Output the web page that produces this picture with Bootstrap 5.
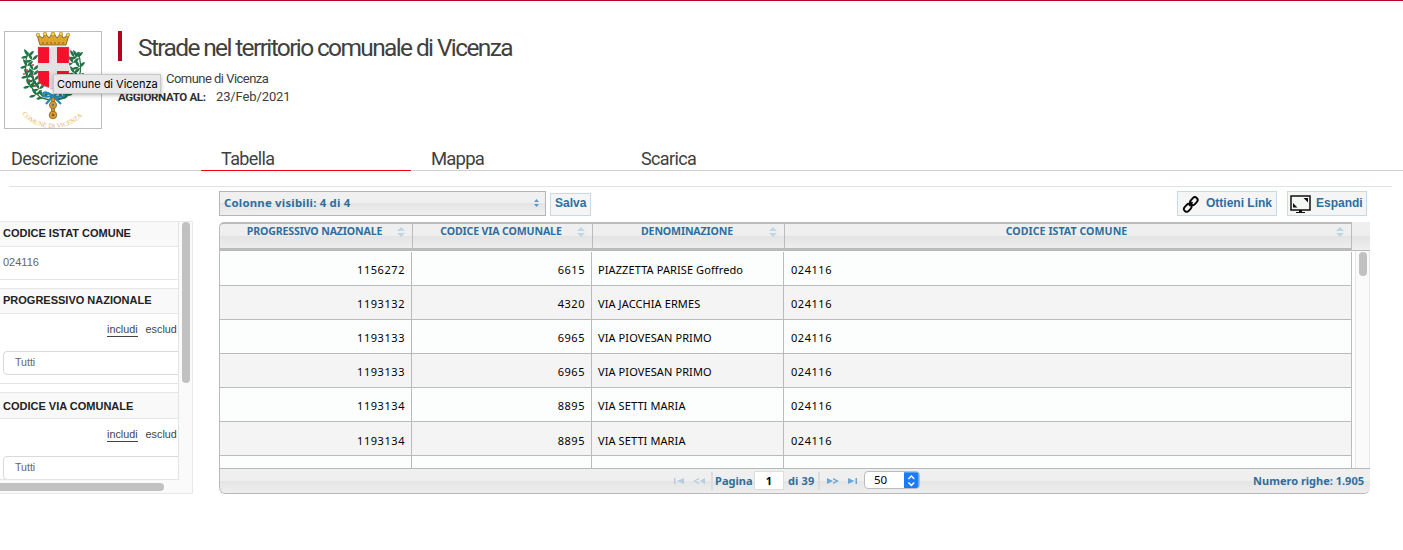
<!DOCTYPE html>
<html lang="it">
<head>
<meta charset="utf-8">
<title>Strade nel territorio comunale di Vicenza</title>
<link href="https://cdn.jsdelivr.net/npm/bootstrap@5.3.0/dist/css/bootstrap.min.css" rel="stylesheet">
<style>
body{font-family:"Noto Sans",sans-serif;color:#404040;height:550px;overflow:hidden;border-top:1px solid #b1071e;background:#fff;line-height:1.2}
.head-area{height:140px;padding:30px 0 0 4px}
.crest{width:98px;height:98px;border:1px solid #bdbdbd;flex:none}
.crest svg{display:block}
.meta{margin-left:16px;font-family:Roboto,sans-serif}
.title-line{border-left:4px solid #b1071e;height:30px;padding-left:16px;font:400 24.5px/33px Roboto,sans-serif;letter-spacing:-1.63px;white-space:nowrap;color:#404040;margin:0}
.owner{padding-left:48px;margin-top:10px;height:16px;font-size:13px;line-height:16px;letter-spacing:-.53px}
.upd{height:18px;line-height:18px;margin-top:1px;font-size:13px;letter-spacing:-.12px}
.upd b{font-size:11.5px;letter-spacing:-.32px;color:#303030;width:98px;white-space:nowrap}
.tip{position:absolute;left:53px;top:74px;width:108px;height:20px;background:#e9e8e8;border:1px solid #c8c8c8;box-shadow:0 1px 4px rgba(0,0,0,.3);font:11px/18px Inter,sans-serif;color:#000;padding-left:3px;white-space:nowrap;letter-spacing:-.02px}
.page-tabs{height:30px;border-bottom:1px solid #d0d0d0}
.page-tabs a{width:210px;padding:6px 0 0 20px;height:30px;font-family:Roboto,sans-serif;font-size:18px;line-height:24px;color:#404040;text-decoration:none;letter-spacing:-.62px}
.page-tabs a.on{border-bottom:1px solid #f00011}
.page-tabs a:first-child{width:201px;padding-left:11px}
.page-tabs a:nth-child(3){letter-spacing:-.75px;letter-spacing:-.8px;word-spacing:0;font-size:18.500px}
.rule{margin:15px 11px 0 9px;border-top:1px solid #e2e2e2}
.side{width:193px;height:273px;margin-top:34px;flex:none;background:#fafafa;border:1px solid #e9e9e9;border-left:0;font-family:"Liberation Sans",sans-serif}
.side-view{width:179px;height:258px;overflow:hidden;background:#fff;border-right:1px solid #e4e4e4;border-bottom:1px solid #e4e4e4}
.facet-h{height:25px;background:#f9f9f9;border-bottom:1px solid #e7e7e7;font-weight:700;font-size:11px;line-height:23px;padding-left:3px;color:#222;white-space:nowrap}
.facet-b{border-bottom:1px solid #e4e4e4;margin-bottom:8px;font-size:11px;color:#666}
.facet+.facet{border-top:1px solid #e7e7e7}
.modes{padding:8px 0 0 107px;height:37px;gap:8px;font-size:10.8px;color:#444;white-space:nowrap}
.modes span{height:15px;line-height:15px}
.modes span:first-child{border-bottom:1px solid #444}
.inp{margin-left:3px;width:200px;height:24px;border:1px solid #d9d9d9;border-radius:4px;padding-left:11px;line-height:21px;font-size:10.6px}
.thumb{background:#c1c1c1;border-radius:4px}
.v1{width:8px;height:161px;margin:0 2px 0 3px}
.h1b{width:164px;height:8px;margin-top:3px;border-radius:0 4px 4px 0}
.main-col{width:1151px;margin-left:26px;margin-top:4px;font-family:"Noto Sans",sans-serif;font-weight:700;font-size:11px;color:#2e6e9e}
.tools{height:31px}
.cols-sel{width:327px;height:25px;border:1px solid #b5b5b5;background:linear-gradient(#f0f0f0 48%,#e5e5e5 50%,#efefef);padding:0 5px 2px 4px;font-size:11.4px;letter-spacing:.2px}
.ab{background:#f5f5f5;border:1px solid #c5dbec;height:24px;font:700 12px/18px "Liberation Sans",sans-serif;color:#2e6e9e;white-space:nowrap}
.gridbox{height:272px;border-bottom:1px solid #b8b8b8;border-radius:5px 0 6px 6px;overflow:hidden}
.g-head{height:29px;background:#efefef linear-gradient(#efefef 46%,#e4e4e4 50%,#f0f0f0)}
.g-cols{width:1133px;border:solid #bbb;border-width:2px 1px 3px;border-radius:5px 0 0 0}
.g-cols>div{border-right:1px solid #bbb;line-height:15px;padding:0 5px 0 12px;font-size:10.6px;letter-spacing:-.15px}
.g-cols>.a{width:193px}
.g-cols>div:last-child{border:0;letter-spacing:.05px}
.g-head-r{border-bottom:1px solid #bbb;margin-top:1px}
.a{width:192px}.b{width:180px}.c{width:192px}.d{flex:1}
.sort{margin:3px 0 0 auto;flex:none}
.g-body{height:217px;overflow:hidden}
.g-rows{width:1133px;border-left:1px solid #bbb;padding-top:1px}
.g-row{height:34px;border-bottom:1px solid #bbb;background:#fcfdfd;font:11px/33px "Noto Sans",sans-serif;color:#000}
.g-row:nth-child(even){background:#f4f4f4}
.g-row div{border-right:1px solid #bbb;padding:1px 6px 0;overflow:hidden;white-space:nowrap;height:100%}
.g-row .c{letter-spacing:.1px}
.g-row .num{letter-spacing:.55px;padding-left:7px}
.g-row:nth-child(6) div{padding-top:2px}
.g-row .a,.g-row .b{text-align:right;letter-spacing:.55px}
.g-bar{width:15px;background:#fafafa;border:solid #e8e8e8;border-width:0 1px;margin-left:3px}
.g-bar .thumb{width:8px;height:24px;margin:1px 0 0 3px}
.g-foot{border:1px solid #b8b8b8;border-width:1px 0 0 1px;height:25px;background:linear-gradient(#efefef 48%,#e5e5e5 52%,#eee);font-size:11px;border-radius:0 0 0 6px}
.pg{background:#fff;border:1px solid #ddd;width:30px;height:19px;text-align:center;color:#000;line-height:17px;margin-top:-1px}
.sep{width:2px;height:18px;background:#ddd}
.ps{width:56px;height:18px;background:#fff;border:1px solid #bbb;border-radius:4px;overflow:hidden;color:#000;font-weight:400;font-size:11.5px;margin-top:-2px}
</style>
</head>
<body>
<svg width="0" height="0" class="position-absolute"><defs>
<g id="so" fill="#bfd6e6"><path d="M4 0 8 4H0zM4 10 0 6h8z"/></g>
<g id="lf"><path d="M0 0Q-4-2-4-7Q1-5 0 0Q2-5 6-5Q5 0 0 0Q-5-1-7 2Q-3 4 0 0"/></g>
</defs></svg>
<header class="head-area d-flex">
  <div class="crest"><svg width="96" height="96" viewBox="0 0 96 96">
    <g fill="none" stroke="#257447" stroke-width="1.3"><path d="M23 20Q14 47 36 66L45 68M73 20Q82 47 60 66L51 68"/></g>
    <g fill="#237547">
      <use href="#lf" x="23" y="24"/><use href="#lf" x="27" y="28"/><use href="#lf" x="22" y="34"/><use href="#lf" x="28" y="38"/><use href="#lf" x="23" y="44"/><use href="#lf" x="29" y="48"/><use href="#lf" x="25" y="54"/><use href="#lf" x="34" y="57"/><use href="#lf" x="31" y="63"/><use href="#lf" x="38" y="65"/><use href="#lf" x="28" y="43"/><use href="#lf" x="31" y="53"/>
      <use href="#lf" x="72" y="25"/><use href="#lf" x="68" y="31"/><use href="#lf" x="74" y="35"/><use href="#lf" x="69" y="25"/><use href="#lf" x="69" y="41"/><use href="#lf" x="73" y="46"/><use href="#lf" x="69" y="54"/><use href="#lf" x="63" y="64"/><use href="#lf" x="57" y="66"/>
    </g>
    <g fill="#d8354a"><circle cx="22" cy="38" r="1"/><circle cx="28" cy="33" r="1"/><circle cx="24" cy="48" r="1"/><circle cx="30" cy="54" r="1"/><circle cx="27" cy="43" r="1"/><circle cx="19" cy="42" r="1"/></g>
    <path d="M35 13 32 3l6 3 2-5 4 5 4-6 4 6 4-5 2 5 6-3-3 10z" fill="#dba62b" stroke="#75551c" stroke-width=".8"/>
    <g fill="#f5d44e" stroke="#8c651d" stroke-width=".5"><circle cx="33" cy="3" r="1.8"/><circle cx="40" cy="2" r="1.8"/><circle cx="48" cy="2" r="2"/><circle cx="56" cy="2" r="1.8"/><circle cx="63" cy="3" r="1.8"/></g>
    <path d="M37 11h22" stroke="#8a5a1b" stroke-dasharray="2 2"/>
    <path d="M33 15h31v30q0 7-7 9l-9 3-9-3q-6-2-6-9z" fill="#f5102c" stroke="#999" stroke-width=".4"/>
    <path d="M44 15h8v41l-4 1-4-1zM33 31h31v8H33z" fill="#e3e1e2"/>
    <path d="M48 64q-8-6-10-2t10 2q8-6 11-2T48 64l-7 8M48 64l8 8M42 61l12 5" fill="none" stroke="#2688b9" stroke-width="2.200"/>
    <g fill="#d99b2b" stroke="#8d6227" stroke-width=".8"><path d="M46.500 66h3v20h-3z"/><circle cx="48" cy="73" r="3.600"/><circle cx="48" cy="83" r="3.800"/></g>
    <circle cx="48" cy="73" r="1.300" fill="#5b7d83"/><circle cx="48" cy="83" r="1.300" fill="#7d5b2b"/>
    <path id="arc" d="M17 82Q29 96 48 96T80 81" fill="none"/>
    <text font-family="Liberation Serif,serif" font-size="6.500" fill="#e5b656"><textPath href="#arc" textLength="68">COMUNE DI VICENZA</textPath></text>
  </svg></div>
  <div class="meta">
    <h1 class="title-line">Strade nel territorio comunale di Vicenza</h1>
    <div class="owner">Comune di Vicenza</div>
    <div class="upd d-flex"><b>AGGIORNATO AL:</b><span>23/Feb/2021</span></div>
  </div>
</header>
<div class="tip">Comune di Vicenza</div>
<nav class="page-tabs d-flex"><a href="#">Descrizione</a><a href="#" class="on">Tabella</a><a href="#">Mappa</a><a href="#">Scarica</a></nav>
<div class="rule"></div>
<main class="d-flex align-items-start">
  <aside class="side">
    <div class="d-flex">
      <div class="side-view">
        <section class="facet"><div class="facet-h">CODICE ISTAT COMUNE</div><div class="facet-b" style="height:33px;padding:9px 0 0 3px">024116</div></section>
        <section class="facet"><div class="facet-h">PROGRESSIVO NAZIONALE</div><div class="facet-b" style="height:70px"><div class="modes d-flex"><span>includi</span><span>esclud</span></div><div class="inp">Tutti</div></div></section>
        <section class="facet"><div class="facet-h" style="height:26px;line-height:26px">CODICE VIA COMUNALE</div><div class="facet-b" style="height:70px"><div class="modes d-flex"><span>includi</span><span>esclud</span></div><div class="inp">Tutti</div></div></section>
      </div>
      <div class="thumb v1"></div>
    </div>
    <div class="thumb h1b"></div>
  </aside>
  <section class="main-col">
    <div class="tools d-flex">
      <div class="cols-sel d-flex align-items-center justify-content-between"><span>Colonne visibili: 4 di 4</span><svg width="7" height="8" viewBox="0 0 7 8" fill="#5a9ac8"><path d="M3.500 0 6 3H1zM3.500 8 1 5h5z"/></svg></div>
      <div class="ab" style="margin:2px 0 0 4px;padding:0 4px;width:41px;height:23px">Salva</div>
      <div class="ab ms-auto d-flex" style="width:100px;height:25px;padding:2px 0 0 4px"><svg width="19" height="20" viewBox="0 0 20 20" fill="none" stroke="#080808" stroke-width="2" style="margin-right:5px"><rect x="-4.500" y="-2.900" width="9" height="5.800" rx="2.900" transform="translate(6 14) rotate(-48)"/><rect x="-4.500" y="-2.900" width="9" height="5.800" rx="2.900" transform="translate(12.500 7) rotate(-48)"/><path d="m7.500 12 3.500-4"/></svg><span>Ottieni Link</span></div>
      <div class="ab d-flex" style="width:80px;height:25px;margin:0 3px 0 10px;padding:2px 0 0 2px"><svg width="21" height="20" viewBox="0 0 21 20" style="margin-right:5px"><path d="M1 2h19v14H1z" fill="#f4f8f2" stroke="#111" stroke-width="1.500"/><path d="M3 13.500V9l4.500 4.500zM18 4v4.500L13.500 4zM9 16h3v2h3v1H6v-1h3z" fill="#111"/></svg><span>Espandi</span></div>
    </div>
    <div class="gridbox">
      <div class="g-head d-flex">
        <div class="g-cols d-flex">
          <div class="a d-flex"><span class="flex-fill text-center">PROGRESSIVO NAZIONALE</span><svg class="sort" width="10" height="10"><use href="#so"/></svg></div>
          <div class="b d-flex"><span class="flex-fill text-center">CODICE VIA COMUNALE</span><svg class="sort" width="10" height="10"><use href="#so"/></svg></div>
          <div class="c d-flex"><span class="flex-fill text-center">DENOMINAZIONE</span><svg class="sort" width="10" height="10"><use href="#so"/></svg></div>
          <div class="d d-flex"><span class="flex-fill text-center">CODICE ISTAT COMUNE</span><svg class="sort" width="10" height="10"><use href="#so"/></svg></div>
        </div>
        <div class="g-head-r flex-fill"></div>
      </div>
      <div class="g-body d-flex">
        <div class="g-rows">
          <div class="g-row d-flex"><div class="a">1156272</div><div class="b">6615</div><div class="c">PIAZZETTA PARISE Goffredo</div><div class="d num">024116</div></div>
          <div class="g-row d-flex"><div class="a">1193132</div><div class="b">4320</div><div class="c">VIA JACCHIA ERMES</div><div class="d num">024116</div></div>
          <div class="g-row d-flex"><div class="a">1193133</div><div class="b">6965</div><div class="c">VIA PIOVESAN PRIMO</div><div class="d num">024116</div></div>
          <div class="g-row d-flex"><div class="a">1193133</div><div class="b">6965</div><div class="c">VIA PIOVESAN PRIMO</div><div class="d num">024116</div></div>
          <div class="g-row d-flex"><div class="a">1193134</div><div class="b">8895</div><div class="c">VIA SETTI MARIA</div><div class="d num">024116</div></div>
          <div class="g-row d-flex"><div class="a">1193134</div><div class="b">8895</div><div class="c">VIA SETTI MARIA</div><div class="d num">024116</div></div>
          <div class="g-row d-flex"><div class="a"></div><div class="b"></div><div class="c"></div><div class="d"></div></div>
        </div>
        <div class="g-bar"><div class="thumb"></div></div>
      </div>
      <div class="g-foot d-flex align-items-center">
        <svg width="32" height="6" viewBox="0 0 32 8" preserveAspectRatio="none" style="margin-left:454px" fill="#b4cddf"><path d="M0 0h1.500v8H0zM10 0v8L3 4zM25 0v2l-4 2 4 2v2l-6-4zM31 0v8l-5-4z"/></svg>
        <div class="sep" style="margin-left:5px"></div><span style="margin-left:2px;width:39px;letter-spacing:.05px">Pagina</span><div class="pg">1</div><span style="margin-left:4px;width:30px;letter-spacing:.15px" class="text-nowrap">di 39</span><div class="sep"></div>
        <svg width="32" height="6" viewBox="0 0 32 8" preserveAspectRatio="none" style="margin-left:6px" fill="#6aa6cf"><path d="M1 0l6 4-6 4zM7 0l6 4-6 4V6l3-2-3-2zM22 0l6.500 4L22 8zM29.500 0H31v8h-1.500z"/></svg>
        <div class="ps d-flex align-items-center" style="margin-left:6px"><span style="padding-left:9px;width:40px">50</span><svg width="15" height="17" viewBox="0 0 15 17"><path d="M0 0h15v17H0z" fill="#1a7bfb"/><path d="m4.500 7 3-3 3 3m-6 3.500 3 3 3-3" fill="none" stroke="#fff" stroke-width="1.500"/></svg></div>
        <span class="ms-auto" style="padding-right:6px">Numero righe: 1.905</span>
      </div>
    </div>
  </section>
</main>
<script src="https://cdn.jsdelivr.net/npm/bootstrap@5.3.0/dist/js/bootstrap.bundle.min.js"></script>
</body>
</html>
